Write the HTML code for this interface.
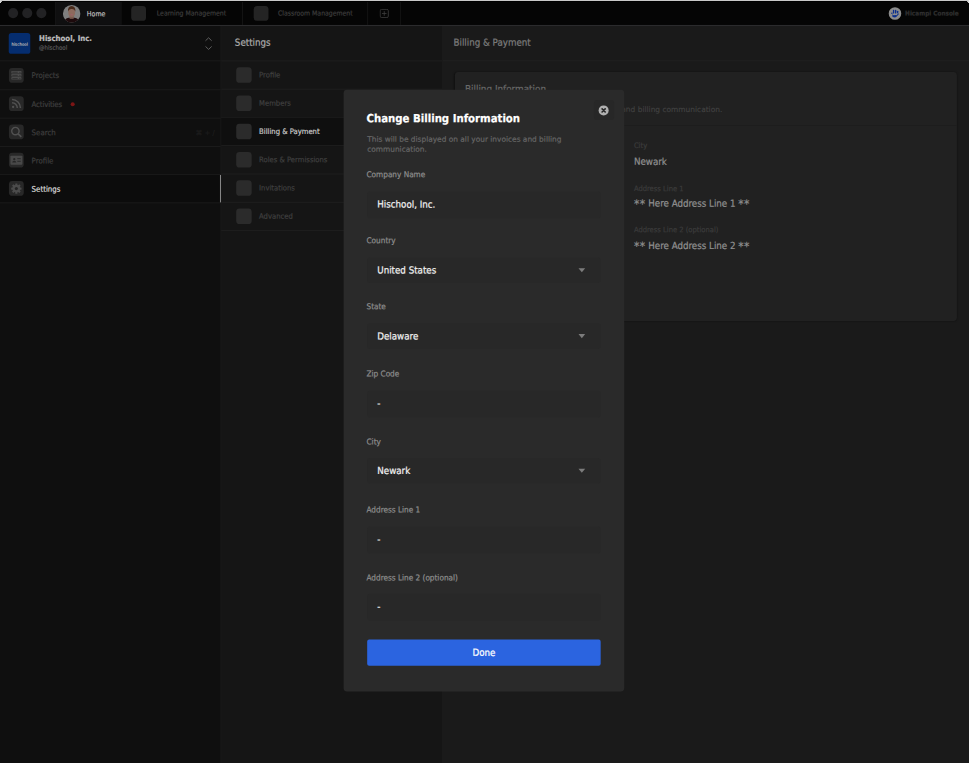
<!DOCTYPE html>
<html lang="en">
<head>
<meta charset="utf-8">
<title>Hicampi Console - Billing &amp; Payment</title>
<style>
html,body{margin:0;padding:0;background:#1a1a1a;}
body{width:969px;height:763px;overflow:hidden;position:relative;
  font-family:"DejaVu Sans Condensed","Liberation Sans",sans-serif;color:#ccc;}
#app{position:absolute;left:0;top:0;width:1440px;height:1134px;transform:scale(0.672917);transform-origin:0 0;background:#1a1a1a;overflow:hidden;}
#app div{position:absolute;white-space:nowrap;box-sizing:border-box;}
#app i{font-style:normal;font-size:1.22em;letter-spacing:.7px;line-height:1px;position:relative;top:1.5px;}
.t{line-height:20px;height:20px;transform:rotate(0.06deg);transform-origin:0 50%;-webkit-text-stroke:0.3px currentColor;}
/* top bar */
#bar{left:0;top:0;width:1440px;height:37px;background:#050505;}
.dot{width:15px;height:15px;border-radius:50%;background:#222224;top:12px;}
.tabsep{top:2px;width:1px;height:35px;background:#1b1b1b;}
.ticon{width:22px;height:22px;border-radius:5px;background:#242424;top:9px;}
.tabtxt{top:10px;font-size:10.2px;color:#3c3c3c;}
/* sidebar */
#side{left:0;top:38px;width:328px;height:1096px;background:#0f0f0f;}
#sideborder{left:328px;top:38px;width:1px;height:1096px;background:#1e1e1e;}
.hsep{height:1px;background:#212121;}
.ibox{width:22px;height:22px;border-radius:5px;background:#282828;}
.srow{left:0;width:328px;height:41px;}
.srow .ibox{left:13px;top:9px;transform:translateX(.3px);}
.srow .t{left:47.4px;top:10.6px;font-size:11.6px;color:#3e3e3e;}
.r0{height:42px;}
.srow.r0 .ibox{top:10px;}
.srow.r0 .t{top:10.7px;}
/* settings column */
#setcol{left:329px;top:38px;width:328px;height:1096px;background:#151515;}
#setborder{left:657px;top:38px;width:1px;height:1096px;background:#1e1e1e;}
.crow{left:0;width:328px;height:41px;}
.crow .ibox{left:22px;top:9px;width:23px;height:23px;background:#2b2b2b;}
.crow .t{left:56.3px;top:11.3px;font-size:11.3px;color:#3f3f3f;}
/* main */
#main{left:658px;top:38px;width:782px;height:1096px;background:#1a1a1a;}
#card{left:18px;top:69px;width:746px;height:370px;border-radius:5px;background:#212121;box-shadow:0 0 3px rgba(0,0,0,.45);}
.lab{font-size:11.2px;color:#3b3b3b;}
.val{font-size:14.4px;color:#909090;}
/* modal */
#modal{left:511px;top:133px;width:417px;height:894px;border-radius:5px;background:#2a2a2a;transform:translate(-.35px,.5px);}
.sub{font-size:11px;color:#666;font-family:'DejaVu Sans','Liberation Sans',sans-serif;}
.flab{left:34px;font-size:12.1px;color:#8e8e8e;}
.inp{left:35px;width:347px;border-radius:4px;background:#282828;}
.inp .t{left:15px;font-size:14.4px;color:#f2f2f2;}
.arrow{width:0;height:0;border-left:5.5px solid transparent;border-right:5.5px solid transparent;border-top:6.5px solid #7c7c7c;left:314px;}
</style>
</head>
<body>
<div id="app">
  <!-- TOP BAR -->
  <div id="bar">
    <div class="dot" style="left:12px"></div>
    <div class="dot" style="left:33px"></div>
    <div class="dot" style="left:54px"></div>
    <div style="left:82px;top:2px;width:99px;height:35px;background:#0f0f10;border-left:1px solid #191919;"></div>
    <svg style="position:absolute;left:93px;top:7px" width="27" height="27" viewBox="0 0 27 27">
      <defs><clipPath id="av"><circle cx="13.5" cy="13.5" r="13"/></clipPath></defs>
      <circle cx="13.5" cy="13.5" r="13" fill="#7f7f7f"/>
      <g clip-path="url(#av)">
        <path d="M2 27 Q3 20.5 9 19.5 L18 19.5 Q24 20.5 25 27 Z" fill="#1d0a0c"/>
        <rect x="10.5" y="15" width="6" height="6" fill="#7a5a4e"/>
        <ellipse cx="13.5" cy="11.5" rx="5" ry="6.6" fill="#8d6a5d"/>
        <path d="M8 10.5 Q7.5 2.5 13.5 2 Q19.5 2.5 19 10.5 Q18 6 13.5 6.2 Q9 6 8 10.5 Z" fill="#4a2a1a"/>
        <ellipse cx="13.5" cy="14.8" rx="1.8" ry="1" fill="#a0606a"/>
      </g>
    </svg>
    <div class="t" style="left:129px;top:10px;font-size:10.4px;color:#bdbdbd;">Home</div>
    <div class="ticon" style="left:195px"></div>
    <div class="t tabtxt" style="left:232.5px">Learning Management</div>
    <div class="tabsep" style="left:360px"></div>
    <div class="ticon" style="left:377px"></div>
    <div class="t tabtxt" style="left:412.5px">Classroom Management</div>
    <div class="tabsep" style="left:546px"></div>
    <svg style="position:absolute;left:564px;top:13px" width="14" height="14" viewBox="0 0 14 14" fill="none" stroke="#3f3f3f" stroke-width="1.2">
      <rect x="0.9" y="0.9" width="12.2" height="12.2" rx="2.2"/>
      <path d="M7 3.6v6.8M3.6 7h6.8"/>
    </svg>
    <div class="tabsep" style="left:595px"></div>
    <svg style="position:absolute;left:1320px;top:10px" width="20" height="20" viewBox="0 0 20 20">
      <circle cx="10" cy="10" r="9.4" fill="#8c8c8c"/>
      <g fill="#0b2f8e">
        <rect x="6.9" y="4.6" width="2" height="5.6" rx=".9"/>
        <rect x="10" y="4.6" width="2" height="5.6" rx=".9"/>
        <rect x="13" y="5.8" width="1.9" height="4" rx=".9"/>
        <circle cx="5.4" cy="9.8" r="1.1"/>
        <path d="M14.6 9.5q1.4.6.6 2.6l-1.6 1.3-.8-.9z"/>
        <path d="M5.9 11.2l2 1.3 4-.3 2 1.2-2.3 1.9-1.6.8-1.7-.4-1.9-.3z"/>
      </g>
    </svg>
    <div class="t" style="left:1345px;top:10px;font-size:9.5px;font-weight:bold;color:#303030;">Hicampi Console</div>
  </div>

  <!-- SIDEBAR -->
  <div id="side">
    <div style="left:13px;top:11px;width:32px;height:31px;border-radius:4px;background:#052d6f;overflow:hidden;">
      <div class="t" style="left:4px;top:6.6px;font-size:6.3px;color:#b4b4b4;letter-spacing:.15px;">hischool</div>
    </div>
    <div class="t" style="left:58px;top:9px;font-size:11.55px;font-weight:bold;color:#bdbdbd;">Hischool, Inc.</div>
    <div class="t" style="left:58px;top:22.6px;font-size:9.1px;color:#565656;">@hischool</div>
    <svg style="position:absolute;left:304px;top:17px" width="12" height="20" viewBox="0 0 12 20" fill="none" stroke="#6a6a6a" stroke-width="1.3">
      <path d="M1.4 5.6L6 1.2l4.6 4.4M1.4 14L6 18.4l4.6-4.4"/>
    </svg>
    <div class="hsep" style="left:0;top:52px;width:328px;"></div>

    <div class="srow r0" style="top:53px">
      <div class="ibox"><svg width="22" height="22" viewBox="0 0 22 22"><g fill="#4b4b4b"><rect x="3.6" y="4.4" width="15" height="3.7" rx=".8"/><rect x="3.6" y="9" width="15" height="3.7" rx=".8"/><rect x="3.6" y="13.6" width="15" height="3.7" rx=".8"/></g><g fill="#2a2a2a"><rect x="5" y="5.7" width="8" height="1.1"/><rect x="5" y="10.3" width="8" height="1.1"/><rect x="5" y="14.9" width="8" height="1.1"/><circle cx="16.3" cy="6.25" r=".8"/><circle cx="16.3" cy="10.85" r=".8"/><circle cx="16.3" cy="15.45" r=".8"/></g></svg></div>
      <div class="t">Projects</div>
    </div>
    <div class="hsep" style="left:0;top:95px;width:328px;"></div>
    <div class="srow" style="top:96px">
      <div class="ibox"><svg width="22" height="22" viewBox="0 0 22 22" fill="none" stroke="#515151" stroke-width="2.2"><circle cx="6.2" cy="16" r="1.7" fill="#515151" stroke="none"/><path d="M4.6 9.7a7.8 7.8 0 0 1 7.8 7.8M4.6 5a12.5 12.5 0 0 1 12.5 12.5"/></svg></div>
      <div class="t" style="letter-spacing:-.25px;">Activities</div>
      <div style="left:105px;top:17.6px;width:6px;height:6px;border-radius:50%;background:#7c1515;"></div>
    </div>
    <div class="hsep" style="left:0;top:137px;width:328px;"></div>
    <div class="srow" style="top:138px">
      <div class="ibox"><svg width="22" height="22" viewBox="0 0 22 22" fill="none" stroke="#515151" stroke-width="2.1"><circle cx="9.6" cy="9.8" r="5.5"/><path d="M13.7 13.9l4.7 4.6" stroke-width="2.4"/></svg></div>
      <div class="t">Search</div>
      <div class="t" style="left:291px;font-size:10.6px;color:#1d1d1d;letter-spacing:.3px;">⌘ + /</div>
    </div>
    <div class="hsep" style="left:0;top:179px;width:328px;"></div>
    <div class="srow" style="top:180px">
      <div class="ibox"><svg width="22" height="22" viewBox="0 0 22 22"><rect x="2.2" y="4.4" width="17.8" height="13.4" rx="1.3" fill="#484848"/><g fill="#262626"><circle cx="7.9" cy="9.5" r="1.7"/><path d="M4.9 14.6q0-2.9 3-2.9t3 2.9z"/><rect x="12.4" y="8.2" width="5.2" height="1.3"/><rect x="12.4" y="12" width="5.2" height="1.3"/></g></svg></div>
      <div class="t">Profile</div>
    </div>
    <div class="hsep" style="left:0;top:221px;width:328px;"></div>
    <div class="srow" style="top:222px;background:#0c0c0c;">
      <div class="ibox"><svg width="22" height="22" viewBox="0 0 22 22"><g transform="translate(11 11.3)" fill="#4b4b4b"><circle r="5.7"/><rect x="-1.6" y="-7.7" width="3.2" height="15.4" rx=".6"/><rect x="-7.7" y="-1.6" width="15.4" height="3.2" rx=".6"/><g transform="rotate(45)"><rect x="-1.6" y="-7.7" width="3.2" height="15.4" rx=".6"/><rect x="-7.7" y="-1.6" width="15.4" height="3.2" rx=".6"/></g></g><circle cx="11" cy="11.3" r="2.3" fill="#242424"/></svg></div>
      <div class="t" style="color:#dcdcdc;">Settings</div>
      <div style="left:326px;top:0;width:2px;height:41px;background:#b4b4b4;transform:translateX(.9px) scaleX(.75);transform-origin:0 0;"></div>
    </div>
    <div class="hsep" style="left:0;top:263px;width:328px;"></div>
  </div>
  <div id="sideborder"></div>

  <!-- SETTINGS COLUMN -->
  <div id="setcol">
    <div class="t" style="left:20px;top:15.1px;font-size:14.4px;color:#ababab;">Settings</div>
    <div class="hsep" style="left:0;top:52px;width:328px;background:#232323;"></div>
    <div class="crow" style="top:53px"><div class="ibox"></div><div class="t">Profile</div></div>
    <div class="hsep" style="left:0;top:94px;width:328px;background:#232323;"></div>
    <div class="crow" style="top:95px"><div class="ibox"></div><div class="t">Members</div></div>
    <div class="hsep" style="left:0;top:136px;width:328px;background:#232323;"></div>
    <div class="crow" style="top:137px;background:#0f0f0f;"><div class="ibox"></div><div class="t" style="color:#c6c6c6;">Billing &amp; Payment</div></div>
    <div class="hsep" style="left:0;top:178px;width:328px;background:#232323;"></div>
    <div class="crow" style="top:179px"><div class="ibox"></div><div class="t">Roles &amp; Permissions</div></div>
    <div class="hsep" style="left:0;top:220px;width:328px;background:#232323;"></div>
    <div class="crow" style="top:221px"><div class="ibox"></div><div class="t">Invitations</div></div>
    <div class="hsep" style="left:0;top:262px;width:328px;background:#232323;"></div>
    <div class="crow" style="top:263px"><div class="ibox"></div><div class="t">Advanced</div></div>
    <div class="hsep" style="left:0;top:304px;width:328px;background:#232323;"></div>
  </div>
  <div id="setborder"></div>

  <!-- MAIN -->
  <div id="main">
    <div class="t" style="left:15.6px;top:15px;font-size:14.4px;color:#7d7d7d;">Billing &amp; Payment</div>
    <div class="hsep" style="left:0;top:52px;width:782px;background:#252525;"></div>
    <div id="card">
      <div class="t" style="left:14.6px;top:15px;font-size:14.6px;color:#6a6a6a;">Billing Information</div>
      <div class="t" style="left:15px;top:45.8px;font-size:11.05px;color:#404040;font-family:'DejaVu Sans','Liberation Sans',sans-serif;">This will be displayed on all your invoices and billing communication.</div>
      <div class="hsep" style="left:0;top:79px;width:746px;background:#1d1d1d;"></div>
      <div class="t lab" style="left:265.5px;top:99.5px;">City</div>
      <div class="t val" style="left:265.5px;top:123px;">Newark</div>
      <div class="t lab" style="left:265.5px;top:164.2px;">Address Line 1</div>
      <div class="t val" style="left:265.5px;top:185px;"><i>**</i> Here Address Line 1 <i>**</i></div>
      <div class="t lab" style="left:265.5px;top:225.3px;">Address Line 2 (optional)</div>
      <div class="t val" style="left:265.5px;top:247.6px;"><i>**</i> Here Address Line 2 <i>**</i></div>
    </div>
  </div>

  <!-- MODAL -->
  <div id="modal">
    <div style="left:372px;top:15px;width:30px;height:30px;border-radius:5px;background:#272727;"></div>
    <svg style="position:absolute;left:378px;top:22px" width="17" height="17" viewBox="0 0 17 17"><circle cx="8.4" cy="8.6" r="7.5" fill="#afafaf"/><path d="M6.1 6.3l4.6 4.6M10.7 6.3l-4.6 4.6" stroke="#262626" stroke-width="2.4" stroke-linecap="round"/></svg>
    <div class="t" style="left:34px;top:32px;font-size:16.8px;font-weight:bold;color:#fff;">Change Billing Information</div>
    <div class="t sub" style="left:34.5px;top:64.2px;">This will be displayed on all your invoices and billing</div>
    <div class="t sub" style="left:34.5px;top:78.9px;">communication.</div>

    <div class="t flab" style="top:116px;">Company Name</div>
    <div class="inp" style="top:150.5px;height:40px;"><div class="t" style="top:9px;">Hischool, Inc.</div></div>

    <div class="t flab" style="top:214px;">Country</div>
    <div class="inp" style="top:249px;height:38px;"><div class="t" style="top:9px;">United States</div><div class="arrow" style="top:16px;"></div></div>

    <div class="t flab" style="top:312px;">State</div>
    <div class="inp" style="top:346.5px;height:38px;"><div class="t" style="top:9px;">Delaware</div><div class="arrow" style="top:16px;"></div></div>

    <div class="t flab" style="top:412px;">Zip Code</div>
    <div class="inp" style="top:446.5px;height:40px;"><div class="t" style="top:9px;">-</div></div>

    <div class="t flab" style="top:512.5px;">City</div>
    <div class="inp" style="top:547px;height:38px;"><div class="t" style="top:9px;">Newark</div><div class="arrow" style="top:16px;"></div></div>

    <div class="t flab" style="top:613.5px;">Address Line 1</div>
    <div class="inp" style="top:648.5px;height:40px;"><div class="t" style="top:9px;">-</div></div>

    <div class="t flab" style="top:715px;">Address Line 2 (optional)</div>
    <div class="inp" style="top:749px;height:40px;"><div class="t" style="top:9px;">-</div></div>

    <div style="left:35px;top:816.5px;width:347px;height:39px;border-radius:3px;background:#2b64e0;"></div>
    <div class="t" style="left:35px;top:826px;width:347px;text-align:center;font-size:14.4px;color:#fff;">Done</div>
  </div>
</div>
<!-- window top edge -->
<div style="position:absolute;left:0;top:25px;width:969px;height:1px;background:#2b2b2d;"></div>
<div style="position:absolute;left:0;top:0;width:969px;height:1px;background:#c9c9c9;"></div>
<div style="position:absolute;left:0;top:1px;width:969px;height:1px;background:#000;"></div>
<div style="position:absolute;left:0;top:0;width:1px;height:3px;background:#d6d6d6;"></div>
<div style="position:absolute;left:1px;top:1px;width:1px;height:1px;background:#bdbdbd;"></div>
<div style="position:absolute;left:968px;top:0;width:1px;height:3px;background:#d6d6d6;"></div>
<div style="position:absolute;left:967px;top:1px;width:1px;height:1px;background:#bdbdbd;"></div>
</body>
</html>
